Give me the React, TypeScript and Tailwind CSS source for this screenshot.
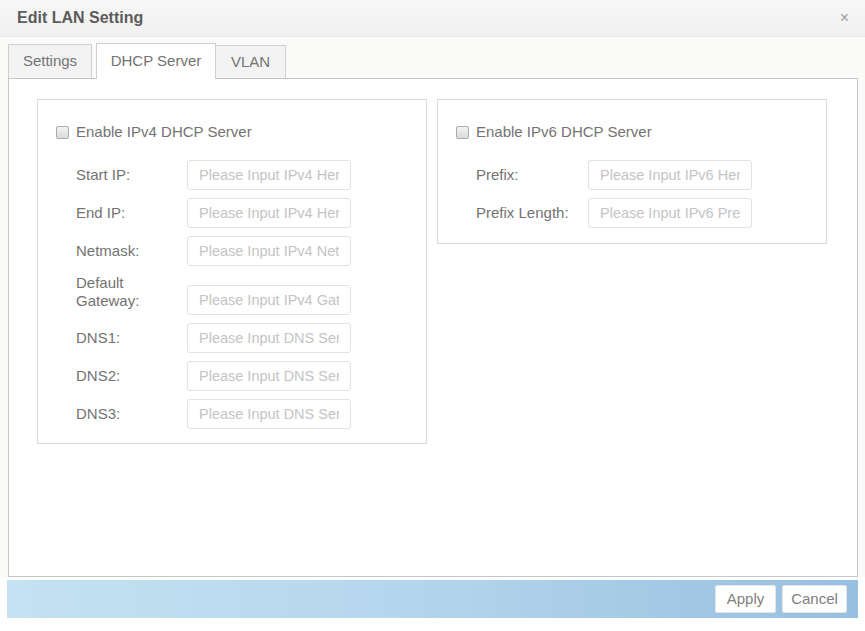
import type { ReactNode } from 'react';

type Field = { label: ReactNode; placeholder: string; tall?: boolean };

const ipv4Fields: Field[] = [
  { label: 'Start IP:', placeholder: 'Please Input IPv4 Here' },
  { label: 'End IP:', placeholder: 'Please Input IPv4 Here' },
  { label: 'Netmask:', placeholder: 'Please Input IPv4 Netmask' },
  {
    label: (
      <>
        Default
        <br />
        Gateway:
      </>
    ),
    placeholder: 'Please Input IPv4 Gateway',
    tall: true,
  },
  { label: 'DNS1:', placeholder: 'Please Input DNS Server' },
  { label: 'DNS2:', placeholder: 'Please Input DNS Server' },
  { label: 'DNS3:', placeholder: 'Please Input DNS Server' },
];

const ipv6Fields: Field[] = [
  { label: 'Prefix:', placeholder: 'Please Input IPv6 Here' },
  { label: 'Prefix Length:', placeholder: 'Please Input IPv6 Prefix Length' },
];

function Checkbox() {
  return (
    <span className="h-[13px] w-[13px] shrink-0 rounded-[2px] border border-[#ababab] bg-gradient-to-b from-[#f4f4f4] to-[#dadada]" />
  );
}

function FieldRow({ field, labelWidth }: { field: Field; labelWidth: string }) {
  return (
    <div className={field.tall ? 'flex items-end' : 'flex items-center'}>
      <span
        className={`${labelWidth} shrink-0 text-[15px] leading-[18px] text-[#737373] ${field.tall ? 'pb-[5px]' : ''}`}
      >
        {field.label}
      </span>
      <input
        type="text"
        placeholder={field.placeholder}
        className="h-[30px] w-[164px] rounded-[3px] border border-[#e2e2e2] bg-white px-[11px] text-[14.5px] text-[#555] outline-none placeholder:text-[#c4c4c4]"
      />
    </div>
  );
}

function ServerBox({
  title,
  fields,
  labelWidth,
  height,
}: {
  title: string;
  fields: Field[];
  labelWidth: string;
  height: string;
}) {
  return (
    <div className={`${height} w-[390px] border border-[#d9d9d9] bg-white`}>
      <label className="ml-[18px] mt-[23px] flex h-[18px] items-center gap-[7px]">
        <Checkbox />
        <span className="text-[15px] text-[#737373]">{title}</span>
      </label>
      <div className="ml-[38px] mt-[19px] flex flex-col gap-[8px]">
        {fields.map((f, i) => (
          <FieldRow key={i} field={f} labelWidth={labelWidth} />
        ))}
      </div>
    </div>
  );
}

export default function App() {
  return (
    <div className="h-[631px] w-[865px] overflow-hidden bg-white font-['Liberation_Sans',Arial,sans-serif]">
      {/* Dialog header */}
      <div className="flex h-[37px] items-center justify-between border-b border-[#e6e6e6] bg-gradient-to-b from-[#f7f7f7] to-[#f1f1f1] pl-[17px] pr-[16px]">
        <span className="text-[16px] font-bold text-[#5c5c5c]">Edit LAN Setting</span>
        <span className="text-[16px] leading-none text-[#a0a0a0]">×</span>
      </div>

      <div className="bg-[#fafaf8] pl-[8px] pr-[7px]">
        {/* Tabs */}
        <div className="flex h-[41px] items-end">
          <div className="flex h-[34px] w-[84px] items-center justify-center border border-b-0 border-[#cfcfcf] bg-[#f3f3f3] text-[15px] text-[#737373]">
            Settings
          </div>
          <div className="relative z-10 -mb-px ml-[4px] flex h-[36px] w-[120px] items-center justify-center border border-b-0 border-[#cfcfcf] bg-white text-[15px] text-[#737373]">
            DHCP Server
          </div>
          <div className="flex h-[33px] w-[70px] items-center justify-center border border-b-0 border-l-0 border-[#cfcfcf] bg-[#f3f3f3] text-[15px] text-[#737373]">
            VLAN
          </div>
        </div>

        {/* Tab content */}
        <div className="flex h-[499px] items-start gap-[10px] border border-[#c6c6c6] bg-white pl-[28px] pt-[20px]">
          <ServerBox
            title="Enable IPv4 DHCP Server"
            fields={ipv4Fields}
            labelWidth="w-[111px]"
            height="h-[345px]"
          />
          <ServerBox
            title="Enable IPv6 DHCP Server"
            fields={ipv6Fields}
            labelWidth="w-[112px]"
            height="h-[145px]"
          />
        </div>
      </div>

      {/* Footer with actions */}
      <div className="mx-[7px] mt-[3px] flex h-[38px] items-center justify-end gap-[6px] bg-gradient-to-r from-[#c4e2f2] via-[#b3d5ec] to-[#97bfe0] pr-[11px]">
        <button className="h-[28px] w-[61px] rounded-[2px] border border-[#e4e4e4] bg-white text-[15px] text-[#808080]">
          Apply
        </button>
        <button className="h-[28px] w-[65px] rounded-[2px] border border-[#e4e4e4] bg-white text-[15px] text-[#808080]">
          Cancel
        </button>
      </div>
    </div>
  );
}
